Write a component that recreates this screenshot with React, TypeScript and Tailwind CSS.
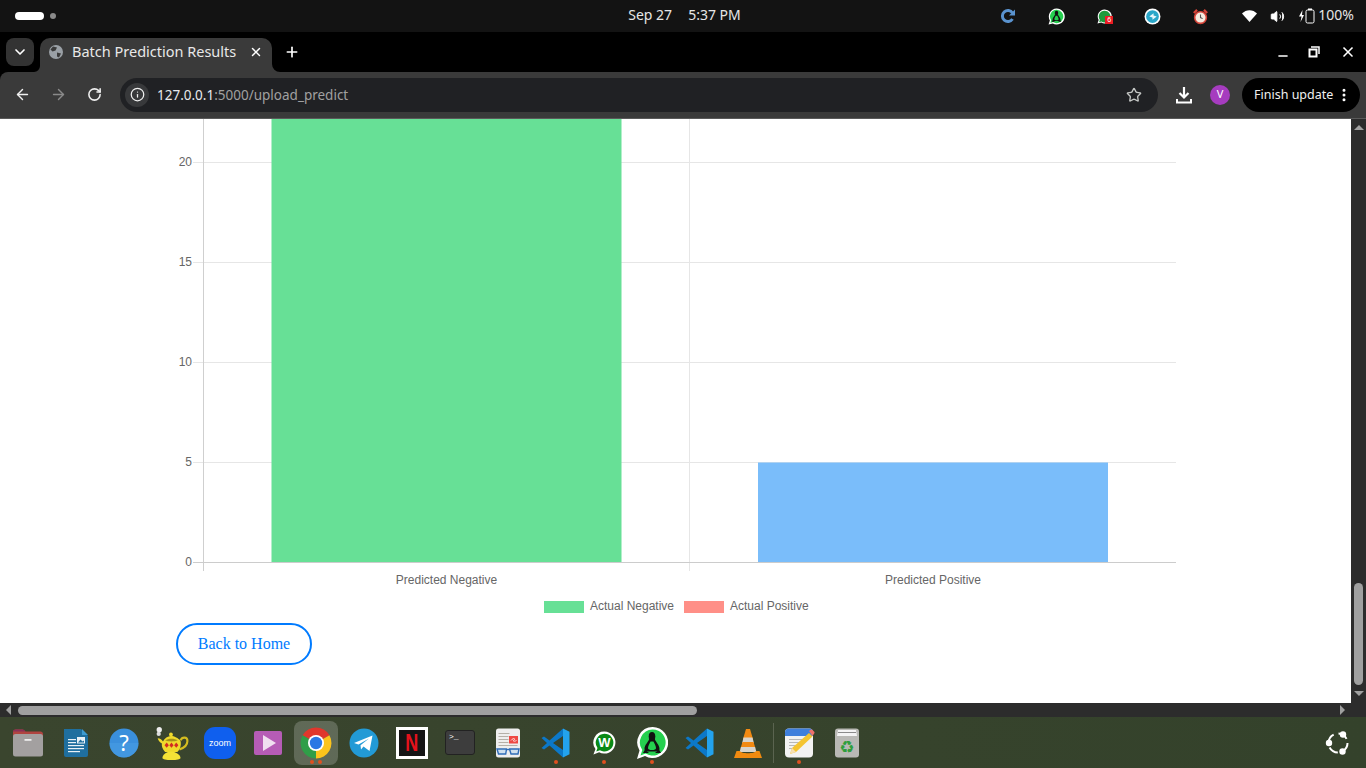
import { ArrowLeft, ArrowRight, ChevronDown, Info, Minus, MoreVertical, Plus, RotateCw, Star, Volume2, X } from "lucide-react";
import type { ReactNode } from "react";

const yTicks = [
  { label: "20", y: 162 },
  { label: "15", y: 262 },
  { label: "10", y: 362 },
  { label: "5", y: 462 },
  { label: "0", y: 562 },
];

const Chart = () => (
  <svg viewBox="176 119 1000 498" className="block w-[1000px] h-[498px]" fontFamily="'Liberation Sans', Arial, sans-serif" fontSize="12" fill="#666666">
    {yTicks.slice(0, 4).map((t) => (
      <line key={t.y} x1="193" x2="1176" y1={t.y + 0.5} y2={t.y + 0.5} stroke="#e6e6e6" />
    ))}
    <line x1="203.5" x2="203.5" y1="119" y2="571" stroke="#cfcfcf" />
    <line x1="689.5" x2="689.5" y1="119" y2="571" stroke="#e6e6e6" />
    <rect x="271.500" y="119" width="350" height="443" fill="#67e096" />
    <rect x="758" y="462.5" width="350" height="100" fill="#7abdfa" />
    <line x1="193" x2="1176" y1="562.5" y2="562.5" stroke="#cccccc" />
    {yTicks.map((t) => (
      <text key={t.label} x="192" y={t.y + 4} textAnchor="end">{t.label}</text>
    ))}
    <text x="446.5" y="584" textAnchor="middle">Predicted Negative</text>
    <text x="933" y="584" textAnchor="middle">Predicted Positive</text>
    <rect x="544" y="601" width="40" height="12" fill="#67e096" />
    <text x="590" y="610">Actual Negative</text>
    <rect x="684" y="601" width="40" height="12" fill="#ff8f87" />
    <text x="730" y="610">Actual Positive</text>
  </svg>
);

const Icon = ({ size = 32, children }: { size?: number; children: ReactNode }) => (
  <svg width={size} height={size} viewBox="0 0 32 32">{children}</svg>
);

const WhatsappTray = ({ inner, fill = "#25d04f", size = 17 }: { inner?: ReactNode; fill?: string; size?: number }) => (
  <svg width={size} height={size} viewBox="0 0 32 32">
    <path d="M16 1a15 15 0 1 1-7 28L1 31l2.5-7.5A15 15 0 0 1 16 1z" fill="#fff" />
    <path d="M16 3.5a12.500 12.500 0 1 1-6.500 23L4.500 28l1.500-5A12.500 12.500 0 0 1 16 3.500z" fill={fill} />
    {inner}
  </svg>
);

const Penguin = () => (
  <g>
    <ellipse cx="16" cy="9.500" rx="3.300" ry="4.500" fill="#111" />
    <path d="M13.200 12c-1 3-4.700 6-4.700 10 0 1.500 1.500 2.500 3.500 2.500h8c2 0 3.500-1 3.500-2.500 0-4-3.700-7-4.700-10z" fill="#111" />
    <path d="M14.600 14.500c-1 2-2.600 4.500-2.600 6.500 0 1.500 1.500 2 4 2s4-.5 4-2c0-2-1.600-4.500-2.600-6.500z" fill="#25d04f" />
    <path d="M9 22.500l-2 3.500h6zM23 22.500l2 3.500h-6z" fill="#111" />
  </g>
);

const Folder = () => (
  <Icon>
    <path d="M1 5c0-1.500 1-2.500 2.500-2.500h7c1.500 0 2 1 3 2h15c1.500 0 2.500 1 2.500 2.500v6H1z" fill="#b04440" />
    <path d="M1 4.500c0-1 1-2 2.500-2h7c1.500 0 2 1 3 2H1z" fill="#8a3058" />
    <rect x="1" y="7" width="30" height="22.500" rx="2.500" fill="#a3a0a0" />
    <rect x="12.500" y="12" width="7" height="1.800" fill="#eee" />
  </Icon>
);

const Writer = () => (
  <Icon>
    <path d="M4 2h17l7 7v19a2 2 0 0 1-2 2H6a2 2 0 0 1-2-2z" fill="#1f6f9f" />
    <path d="M22 2l6 6h-6z" fill="#3d9bd0" />
    <g fill="#e8f1f6">
      <rect x="8" y="12" width="8" height="1.200" />
      <rect x="8" y="15" width="8" height="1.200" />
      <rect x="8" y="18" width="16" height="1.200" />
      <rect x="8" y="21" width="16" height="1.200" />
      <rect x="8" y="24" width="12" height="1.200" />
      <rect x="17" y="10" width="8" height="6.500" />
    </g>
    <path d="M18 15.500l2.500-3 2 2 1.500-1v2z" fill="#1f6f9f" />
  </Icon>
);

const Help = () => (
  <Icon>
    <circle cx="16" cy="16" r="14.500" fill="#3a8fdc" />
    <path d="M1.500 16a14.500 14.500 0 0 0 29 0z" fill="#4a9fe4" opacity=".5" />
    <text x="16" y="23.500" textAnchor="middle" fontSize="22" fontFamily="'Noto Sans', sans-serif" fill="#fff">?</text>
  </Icon>
);

const Lamp = () => (
  <Icon size={34}>
    <circle cx="4" cy="3.500" r="2.500" fill="#eee" />
    <circle cx="3.500" cy="7.500" r="2" fill="#ddd" />
    <path d="M24 13.500c1.500-3.500 6.500-3.500 6.500 .5 0 3.500-3 6.500-7.500 8" fill="none" stroke="#d4bc20" strokeWidth="2" />
    <path d="M2.500 11.500c2.500 0 4 1.500 5 3 1.500-3 4.500-5 7.500-5s7 2 9 4.500c1 4-.5 8-3 10.500H9.500C7 22 6 18.500 6.500 16.500 4.500 15.500 3 13.500 2.500 11.500z" fill="#f0da2c" />
    <circle cx="15" cy="8" r="1.800" fill="#f0da2c" />
    <path d="M9.500 13.500c3-2 9-2 12 0-3 1.500-9 1.500-12 0z" fill="#a69318" />
    <path d="M7 30c0-3 4-6 8-6s9 3 9 6c0 1-3.500 2-8.500 2S7 31 7 30z" fill="#f5e236" />
    <g fill="#d42c22">
      <path d="M11 15.500l2 2.500-2 2.500-2-2.500z" />
      <path d="M15.500 15.500l2 2.500-2 2.500-2-2.500z" />
      <path d="M20 15.500l2 2.500-2 2.500-2-2.500z" />
    </g>
  </Icon>
);

const Zoom = () => (
  <Icon>
    <rect x="0" y="0" width="32" height="32" rx="11" fill="#0f5fee" />
    <text x="16" y="19" textAnchor="middle" fontSize="9" fontFamily="'Liberation Sans', sans-serif" fill="#fff">zoom</text>
  </Icon>
);

const VideoPlayer = () => (
  <Icon>
    <rect x="2" y="4" width="28" height="24" rx="2" fill="#b65cb6" />
    <path d="M11 8l13 8-13 8z" fill="#f0dff0" />
  </Icon>
);

const Chrome = () => (
  <Icon>
    <path d="M16 16L2.600 8.250A15.500 15.500 0 0 1 29.400 8.250z" fill="#e0372c" />
    <path d="M16 16L29.400 8.250A15.500 15.500 0 0 1 16 31.500z" fill="#fcc41c" />
    <path d="M16 16L16 31.500A15.500 15.500 0 0 1 2.600 8.250z" fill="#2f9e48" />
    <circle cx="16" cy="16" r="8" fill="#fff" />
    <circle cx="16" cy="16" r="6.200" fill="#2a78e4" />
  </Icon>
);

const Telegram = () => (
  <Icon>
    <circle cx="16" cy="16" r="14.500" fill="#229ad6" />
    <path d="M6 16L24.500 8.500 21.500 24 15.500 19.500 13 22.500 12.500 18.200 21 11.500 10.500 17.500z" fill="#fff" />
  </Icon>
);

const Netflix = () => (
  <div className="w-8 h-8 bg-[#151515] border-[3px] border-white flex items-center justify-center">
    <span className="text-[#e5121c] text-[24px] font-bold leading-none font-['Liberation_Sans',sans-serif] scale-x-75">N</span>
  </div>
);

const Terminal = () => (
  <div className="w-[30px] h-[25px] rounded-[3px] bg-[#3d3d3d] border border-[#222] pl-[3px] text-white text-[8px] leading-[12px] font-['Liberation_Mono',monospace]">&gt;_</div>
);

const Viewer = () => (
  <Icon>
    <rect x="4" y="1.500" width="24" height="29" rx="2.500" fill="#eeeeee" />
    <g fill="#b5b0a8">
      <rect x="6.500" y="6" width="11" height="1" />
      <rect x="6.500" y="9" width="10" height="1" />
      <rect x="6.500" y="12" width="10" height="1" />
      <rect x="6.500" y="15" width="10" height="1" />
      <rect x="6.500" y="18" width="19" height="1" />
    </g>
    <rect x="17" y="9" width="9" height="7.500" fill="#ef4a44" />
    <path d="M19 13.500c2-3 5-2 3-.5s1 1.500 2.500 .5" fill="none" stroke="#fff" strokeWidth=".8" />
    <g fill="#cfe0f0" stroke="#2e6cb8" strokeWidth="1.400">
      <path d="M5 22h9.500l-.8 5H6.500z" />
      <path d="M17.500 22H27l-1 5h-7z" />
    </g>
    <rect x="14" y="22" width="4" height="1.200" fill="#2e6cb8" />
  </Icon>
);

const VsCode = () => (
  <Icon>
    <path d="M23 1.500L29.500 4.800v22.400L23 30.500z" fill="#23a3ee" />
    <path d="M23 1.500L9.500 13.500 4 9.500 1.500 11l5.500 5-5.500 5L4 22.500l5.500-4L23 30.500V23L13 16l10-7z" fill="#0c78c8" />
  </Icon>
);

const WhatsappW = () => (
  <Icon size={26}>
    <path d="M16.500 2a13.500 13.500 0 1 1-6.500 25.300L3 30l2.500-6.500A13.500 13.500 0 0 1 16.500 2z" fill="#fff" />
    <path d="M16.500 4.500a11 11 0 1 1-5.500 20.500L6.500 26.500 8 22A11 11 0 0 1 16.500 4.500z" fill="#0a8a16" />
    <text x="16.500" y="21.500" textAnchor="middle" fontSize="16" fontWeight="700" fontFamily="'Liberation Sans', sans-serif" fill="#fff">W</text>
  </Icon>
);

const WhatsappBig = () => (
  <Icon>
    <path d="M16.500 0a15.500 15.500 0 1 1-7.500 29L1 32l2.500-8.500A15.500 15.500 0 0 1 16.500 0z" fill="#fff" />
    <path d="M16.500 2.500a13 13 0 1 1-6.800 24L4.500 28.500l1.800-5.500A13 13 0 0 1 16.500 2.500z" fill="#25d04f" />
    <Penguin />
  </Icon>
);

const Vlc = () => (
  <Icon>
    <path d="M14 2h4l3 10H11z" fill="#f28a12" />
    <path d="M11.500 10.500h9l1.500 6H10z" fill="#d8d4cc" />
    <path d="M10.500 15h11l2 6.500H8.500z" fill="#f28a12" />
    <path d="M9 20h14l1.500 5h-17z" fill="#d8d4cc" />
    <path d="M4.500 24h3.500c1 3 15 3 16 0h3.500L30 31H2z" fill="#f08a10" />
  </Icon>
);

const Notes = () => (
  <Icon>
    <rect x="2" y="1.500" width="28" height="29" rx="4" fill="#f2f2f2" />
    <path d="M2 9V5.500a4 4 0 0 1 4-4h20a4 4 0 0 1 4 4V9z" fill="#3f7fdc" />
    <g fill="#b8b8b8">
      <rect x="6" y="12" width="14" height="1" />
      <rect x="6" y="15" width="12" height="1" />
      <rect x="6" y="18" width="9" height="1" />
      <rect x="6" y="21" width="7" height="1" />
    </g>
    <path d="M26 6l3.500 3.500L13 25l-6 2 2-6z" fill="#f4c430" />
    <path d="M26 4l2-1.500c1-.5 4 2.500 3.500 3.500L29.500 9z" fill="#f0706a" />
    <path d="M9 21l-2 6 6-2z" fill="#f7e0b0" />
  </Icon>
);

const Trash = () => (
  <Icon>
    <rect x="4" y="1.500" width="24" height="29" rx="3" fill="#b9b9b5" />
    <path d="M7 3h18l1 6H6z" fill="#f3f3f3" />
    <rect x="7" y="5" width="18" height="1" fill="#8a8a8a" />
    <text x="16" y="25.500" textAnchor="middle" fontSize="17" fontFamily="'DejaVu Sans', sans-serif" fill="#2f9e3c">♻</text>
  </Icon>
);

const dockItems: { node: ReactNode; dots?: number; active?: boolean }[] = [
  { node: <Folder /> },
  { node: <Writer /> },
  { node: <Help /> },
  { node: <Lamp /> },
  { node: <Zoom /> },
  { node: <VideoPlayer /> },
  { node: <Chrome />, dots: 2, active: true },
  { node: <Telegram /> },
  { node: <Netflix /> },
  { node: <Terminal /> },
  { node: <Viewer /> },
  { node: <VsCode />, dots: 1 },
  { node: <WhatsappW />, dots: 1 },
  { node: <WhatsappBig />, dots: 1 },
  { node: <VsCode /> },
  { node: <Vlc /> },
];

const DockCell = ({ node, dots = 0, active }: { node: ReactNode; dots?: number; active?: boolean }) => (
  <div className="relative w-12 h-[51px] flex items-center justify-center">
    {active && <div className="absolute left-[2px] top-[4px] w-11 h-11 rounded-lg bg-white/20" />}
    <div className="relative">{node}</div>
    {dots > 0 && (
      <div className="absolute bottom-[4px] left-0 right-0 flex justify-center gap-1">
        {Array.from({ length: dots }).map((_, i) => (
          <span key={i} className="w-1 h-1 rounded-full bg-[#e0501f]" />
        ))}
      </div>
    )}
  </div>
);

const TopBar = () => (
  <div className="h-8 bg-[#131313] flex items-center text-[14px] text-[#e6e6e6]">
    <div className="flex-1 flex items-center pl-[15px] gap-[6px]">
      <span className="w-[29px] h-[8px] rounded-full bg-white" />
      <span className="w-[6px] h-[6px] rounded-full bg-[#8a8a8a]" />
    </div>
    <div className="flex gap-4 pb-1">
      <span>Sep 27</span>
      <span>5:37 PM</span>
    </div>
    <div className="flex-1 flex items-center justify-end pr-3">
      <div className="w-12 flex justify-center">
        <svg width="16" height="16" viewBox="0 0 16 16"><path d="M12.500 11a5.500 5.500 0 1 1 0-6" fill="none" stroke="#5a93cf" strokeWidth="3" /><path d="M15 1.500v6H9z" fill="#5a93cf" /></svg>
      </div>
      <div className="w-12 flex justify-center"><WhatsappTray inner={<Penguin />} /></div>
      <div className="w-12 flex justify-center relative">
        <WhatsappTray fill="#1d9a3c" size={15} />
        <span className="absolute left-[25px] top-[7px] w-[8px] h-[8px] bg-[#ec1c24] text-white text-[7px] leading-[8px] text-center">6</span>
      </div>
      <div className="w-12 flex justify-center">
        <svg width="17" height="17" viewBox="0 0 16 16"><circle cx="8" cy="8" r="7.500" fill="#fff" /><circle cx="8" cy="8" r="6" fill="#2aa7c9" /><path d="M5 8l4-3v2l3 1-4 3V9z" fill="#e8f6fa" /></svg>
      </div>
      <div className="w-12 flex justify-center">
        <svg width="17" height="17" viewBox="0 0 16 16"><circle cx="8" cy="9" r="5.500" fill="#f5ece0" stroke="#d8453a" strokeWidth="1.500" /><path d="M8 6v3l2 1" fill="none" stroke="#555" /><path d="M1 4l3-3 1.500 1.500-3 3zM15 4l-3-3-1.500 1.500 3 3z" fill="#d8453a" /></svg>
      </div>
      <div className="w-[28px] flex justify-center ml-[11px]">
        <svg width="15" height="12" viewBox="0 0 15 12"><path d="M0 3.500C4-1 11-1 15 3.500L7.500 12z" fill="#fff" /></svg>
      </div>
      <div className="w-[28px] flex justify-center">
        <Volume2 size={15} color="#fff" fill="#fff" strokeWidth={1.500} />
      </div>
      <svg width="18" height="16" viewBox="0 0 18 16" className="ml-[7px] mr-[2px]">
        <path d="M4.500 2L1 8.500h2.500L2.500 14 6 7H4z" fill="#fff" />
        <rect x="8" y="2" width="8" height="13" rx="1.500" fill="none" stroke="#fff" />
        <rect x="10" y="0.500" width="4" height="1.500" fill="#fff" />
      </svg>
      <span className="pb-1">100%</span>
    </div>
  </div>
);

const TabStrip = () => (
  <div className="h-10 bg-black flex items-end pl-[6px]">
    <div className="mb-[6px] w-7 h-7 rounded-lg bg-[#333333] flex items-center justify-center">
      <ChevronDown size={16} color="#fff" strokeWidth={2.500} />
    </div>
    <svg width="6" height="6" viewBox="0 0 6 6"><path d="M6 0v6H0a6 6 0 0 0 6-6z" fill="#3a3a3a" /></svg>
    <div className="w-[232px] h-[34px] bg-[#3a3a3a] rounded-t-[10px] flex items-center pl-2 pr-[9px] pb-[6px] text-[14.500px] text-[#e8e8e8]">
      <svg width="16" height="16" viewBox="0 0 16 16" className="mr-[8px]">
        <circle cx="8" cy="8" r="7" fill="#9aa0a6" />
        <path d="M5 2.500l4 1-1.500 3-3 1-2-2zM9 8.500l4 1-2 4-2-1z" fill="#3a3a3a" />
      </svg>
      <span className="flex-1 whitespace-nowrap">Batch Prediction Results</span>
      <X size={14} color="#fff" strokeWidth={2.500} />
    </div>
    <svg width="8" height="8" viewBox="0 0 8 8"><path d="M0 0v8h8a8 8 0 0 1-8-8z" fill="#3a3a3a" /></svg>
    <div className="mb-3 ml-[4px]">
      <Plus size={16} color="#fff" strokeWidth={2.500} />
    </div>
    <div className="ml-auto mb-[12px] flex items-center text-white">
      <div className="w-8 flex justify-center translate-x-px"><Minus size={14} strokeWidth={2.500} className="translate-y-1" /></div>
      <div className="w-8 flex justify-center">
        <svg width="12" height="12" viewBox="0 0 12 12"><path d="M3 1h8v7" fill="none" stroke="#fff" strokeWidth="1.500" /><rect x="1.500" y="3.500" width="7" height="7" fill="none" stroke="#fff" strokeWidth="2" /></svg>
      </div>
      <div className="w-[36px] flex justify-center"><X size={16} strokeWidth={2.500} /></div>
    </div>
  </div>
);

const Toolbar = () => (
  <div className="h-[47px] bg-[#3a3a3a] border-b border-[#5a5a5a] flex items-center rounded-tl-[8px] pl-[14px] pr-[6px] pb-px">
    <ArrowLeft size={17} color="#f0f0f0" strokeWidth={2} />
    <ArrowRight size={17} color="#8a8a8a" strokeWidth={2} className="ml-[19px]" />
    <RotateCw size={15} color="#f0f0f0" strokeWidth={2.500} className="ml-5" />
    <div className="ml-[18px] h-[34px] w-[1038px] rounded-full bg-[#202124] flex items-center pl-[5px] pr-4">
      <div className="w-[24px] h-[24px] rounded-full bg-[#38393b] flex items-center justify-center mr-[8px]">
        <Info size={15} color="#f0f0f0" strokeWidth={2} />
      </div>
      <span className="flex-1 pt-0.5 text-[13.500px] text-[#a0a0a0] whitespace-nowrap"><span className="text-[#e8eaed]">127.0.0.1</span>:5000/upload_predict</span>
      <Star size={16} color="#c4c7c5" strokeWidth={2} />
    </div>
    <svg width="18" height="18" viewBox="0 0 18 18" className="ml-[17px]">
      <path d="M9 1v10M4.500 7L9 11.500 13.500 7" fill="none" stroke="#fff" strokeWidth="2.200" />
      <path d="M2 13v3.500h14V13" fill="none" stroke="#fff" strokeWidth="2" />
    </svg>
    <div className="ml-[17px] w-5 h-5 rounded-full bg-[#a63cbf] flex items-center justify-center text-[11px] text-white">V</div>
    <div className="ml-3 h-[34px] w-[118px] rounded-full bg-black flex items-center pl-3 text-[12.500px] text-[#f0f0f0]">
      <span className="flex-1 pt-0.5 whitespace-nowrap">Finish update</span>
      <MoreVertical size={16} color="#fff" strokeWidth={2.500} className="mr-[8px]" />
    </div>
  </div>
);

const Page = () => (
  <div className="flex h-[584px]">
    <div className="flex-1 bg-white overflow-hidden pl-[176px]">
      <Chart />
      <a href="#" className="inline-flex mt-[6px] w-[136px] h-[42px] items-center justify-center rounded-full border-2 border-[#007bff] text-[#007bff] text-[16px] font-['Liberation_Serif',serif]">
        Back to Home
      </a>
    </div>
    <div className="w-[15px] bg-[#2c2c2c] flex flex-col items-center pt-[6px]">
      <span className="w-0 h-0 border-x-[5px] border-x-transparent border-b-[5px] border-b-[#a0a0a0]" />
      <span className="mt-auto w-[9px] h-[102px] rounded-full bg-[#a0a0a0]" />
      <span className="mt-[6px] mb-[7px] w-0 h-0 border-x-[5px] border-x-transparent border-t-[5px] border-t-[#a0a0a0]" />
    </div>
  </div>
);

const HScrollbar = () => (
  <div className="h-[14px] bg-[#2c2c2c] flex items-center pl-[6px] pr-[21px]">
    <span className="w-0 h-0 border-y-[5px] border-y-transparent border-r-[5px] border-r-[#a0a0a0]" />
    <span className="ml-[7px] w-[679px] h-[9px] rounded-full bg-[#a0a0a0]" />
    <span className="ml-auto w-0 h-0 border-y-[5px] border-y-transparent border-l-[5px] border-l-[#a0a0a0]" />
  </div>
);

const Dock = () => (
  <div className="h-[51px] bg-linear-to-r from-[#3a452e] to-[#34422b] flex items-center pl-1 pr-[15px]">
    {dockItems.map((item, i) => (
      <DockCell key={i} {...item} />
    ))}
    <div className="mx-px w-px h-[40px] bg-[#5b6450]" />
    <DockCell node={<Notes />} dots={1} />
    <DockCell node={<Trash />} />
    <div className="ml-auto">
      <svg width="26" height="26" viewBox="0 0 26 26">
        <circle cx="13" cy="13" r="9.500" fill="none" stroke="#fff" strokeWidth="2" strokeDasharray="10 5" />
        <circle cx="4" cy="13" r="3.200" fill="#fff" />
        <circle cx="18" cy="4.500" r="3.200" fill="#fff" />
        <circle cx="17.500" cy="21.500" r="3.200" fill="#fff" />
      </svg>
    </div>
  </div>
);

export default function App() {
  return (
    <div className="w-[1366px] h-[768px] overflow-hidden font-['Noto_Sans',sans-serif]">
      <TopBar />
      <TabStrip />
      <div className="bg-black">
        <Toolbar />
      </div>
      <Page />
      <HScrollbar />
      <Dock />
    </div>
  );
}
